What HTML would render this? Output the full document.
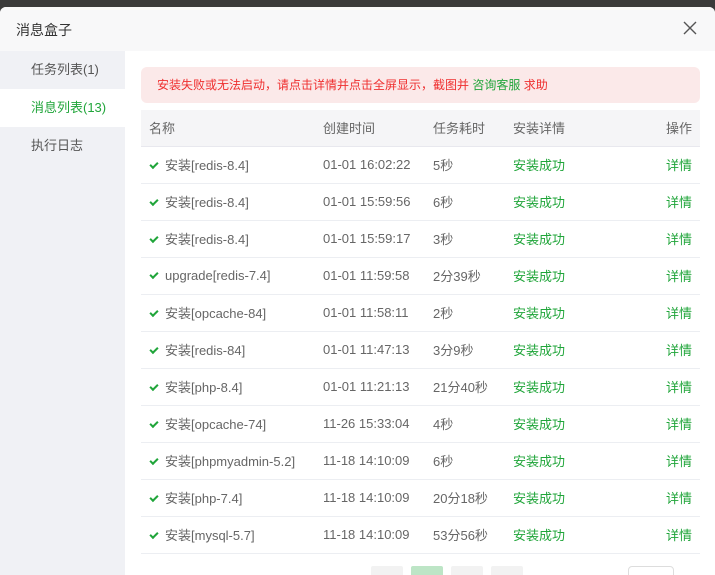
<!DOCTYPE html>
<html><head><meta charset="utf-8"><style>
*{margin:0;padding:0;box-sizing:border-box}
body{width:715px;height:575px;overflow:hidden;background:#3a3a3a;font-family:"Liberation Sans","Noto Sans CJK SC",sans-serif;font-size:12px;color:#666;position:relative}
.dlg{position:absolute;left:0;top:7px;width:715px;height:568px;background:#fff;border-radius:6px 6px 0 0;overflow:hidden}
.hd{height:44px;background:#f8f8f9;position:relative}
.hd .t{position:absolute;left:16px;top:13px;font-size:14px;color:#333}
.x{position:absolute;left:683px;top:14px;width:14px;height:14px}
.side{position:absolute;left:0;top:44px;width:125px;bottom:0;background:#f0f1f5}
.side div{height:38px;line-height:38px;padding-left:31px;font-size:13px;color:#555}
.side .a{background:#fff;color:#20a53a}
.alert{position:absolute;left:141px;top:60px;width:559px;height:36px;background:#fbe9e9;border-radius:6px;color:#ef2f2f;line-height:36px;padding-left:16px;font-size:12px}
.alert b{font-weight:normal;color:#20a53a}
table{position:absolute;left:141px;top:103px;width:559px;border-collapse:collapse}
th{height:36px;background:#f5f5f7;font-weight:normal;text-align:left;color:#666;font-size:13px;border-bottom:1px solid #e8e8ee}
td{height:37px;border-bottom:1px solid #eceef2;font-size:13px;color:#666}
.g{color:#20a53a}
.r{text-align:right;padding-right:8px}
.ck{display:inline-block;width:8px;height:5px;border-left:2px solid #20a53a;border-bottom:2px solid #20a53a;transform:rotate(-45deg);margin:0 7px 3px 9px}
.pg{position:absolute;top:559px;width:32px;height:20px;background:#f2f2f2;border-radius:2px}
</style></head><body>
<div class="dlg">
<div class="hd"><span class="t">消息盒子</span>
<svg class="x" viewBox="0 0 14 14"><path d="M1 1L13 13M13 1L1 13" stroke="#555" stroke-width="1.4"/></svg></div>
<div class="side"><div>任务列表(1)</div><div class="a">消息列表(13)</div><div>执行日志</div></div>
<div class="alert">安装失败或无法启动，请点击详情并点击全屏显示，截图并 <b>咨询客服</b> 求助</div>
<table>
<tr><th style="width:182px;padding-left:8px">名称</th><th style="width:110px">创建时间</th><th style="width:80px">任务耗时</th><th>安装详情</th><th class="r">操作</th></tr>
<tr><td><i class="ck"></i>安装[redis-8.4]</td><td>01-01 16:02:22</td><td>5秒</td><td class="g">安装成功</td><td class="g r">详情</td></tr>
<tr><td><i class="ck"></i>安装[redis-8.4]</td><td>01-01 15:59:56</td><td>6秒</td><td class="g">安装成功</td><td class="g r">详情</td></tr>
<tr><td><i class="ck"></i>安装[redis-8.4]</td><td>01-01 15:59:17</td><td>3秒</td><td class="g">安装成功</td><td class="g r">详情</td></tr>
<tr><td><i class="ck"></i>upgrade[redis-7.4]</td><td>01-01 11:59:58</td><td>2分39秒</td><td class="g">安装成功</td><td class="g r">详情</td></tr>
<tr><td><i class="ck"></i>安装[opcache-84]</td><td>01-01 11:58:11</td><td>2秒</td><td class="g">安装成功</td><td class="g r">详情</td></tr>
<tr><td><i class="ck"></i>安装[redis-84]</td><td>01-01 11:47:13</td><td>3分9秒</td><td class="g">安装成功</td><td class="g r">详情</td></tr>
<tr><td><i class="ck"></i>安装[php-8.4]</td><td>01-01 11:21:13</td><td>21分40秒</td><td class="g">安装成功</td><td class="g r">详情</td></tr>
<tr><td><i class="ck"></i>安装[opcache-74]</td><td>11-26 15:33:04</td><td>4秒</td><td class="g">安装成功</td><td class="g r">详情</td></tr>
<tr><td><i class="ck"></i>安装[phpmyadmin-5.2]</td><td>11-18 14:10:09</td><td>6秒</td><td class="g">安装成功</td><td class="g r">详情</td></tr>
<tr><td><i class="ck"></i>安装[php-7.4]</td><td>11-18 14:10:09</td><td>20分18秒</td><td class="g">安装成功</td><td class="g r">详情</td></tr>
<tr><td><i class="ck"></i>安装[mysql-5.7]</td><td>11-18 14:10:09</td><td>53分56秒</td><td class="g">安装成功</td><td class="g r">详情</td></tr>
</table>
<div class="pg" style="left:371px"></div>
<div class="pg" style="left:411px;background:#bde5c6"></div>
<div class="pg" style="left:451px"></div>
<div class="pg" style="left:491px"></div>
<div class="pg" style="left:628px;width:46px;background:#fff;border:1px solid #ddd;border-radius:4px"></div>
</div>
</body></html>
